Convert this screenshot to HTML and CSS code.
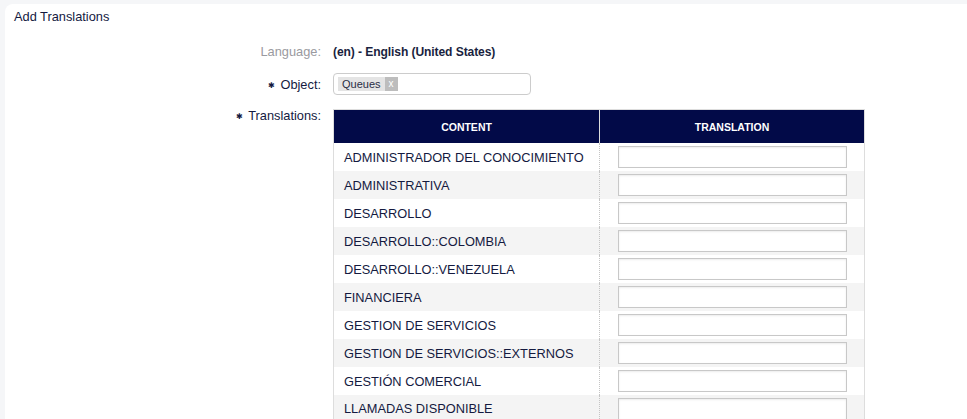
FILE: index.html
```html
<!DOCTYPE html>
<html>
<head>
<meta charset="utf-8">
<link rel="stylesheet" href="styles.css">
</head>
<body>
<div class="card">
  <h2 class="title">Add Translations</h2>
  <div class="form">
    <div class="label muted">Language:</div>
    <div class="value lang">(en) - English (United States)</div>

    <div class="label obj"><span class="req">✱</span> Object:</div>
    <div class="value obj">
      <div class="select">
        <span class="tag"><span class="tag-text">Queues</span><span class="tag-x">x</span></span>
      </div>
    </div>

    <div class="label trl"><span class="req">✱</span> Translations:</div>
    <div class="value trl">
      <table class="grid">
        <thead>
          <tr><th>CONTENT</th><th>TRANSLATION</th></tr>
        </thead>
        <tbody>
          <tr><td>ADMINISTRADOR DEL CONOCIMIENTO</td><td><input type="text"></td></tr>
          <tr><td>ADMINISTRATIVA</td><td><input type="text"></td></tr>
          <tr><td>DESARROLLO</td><td><input type="text"></td></tr>
          <tr><td>DESARROLLO::COLOMBIA</td><td><input type="text"></td></tr>
          <tr><td>DESARROLLO::VENEZUELA</td><td><input type="text"></td></tr>
          <tr><td>FINANCIERA</td><td><input type="text"></td></tr>
          <tr><td>GESTION DE SERVICIOS</td><td><input type="text"></td></tr>
          <tr><td>GESTION DE SERVICIOS::EXTERNOS</td><td><input type="text"></td></tr>
          <tr><td>GESTIÓN COMERCIAL</td><td><input type="text"></td></tr>
          <tr><td>LLAMADAS DISPONIBLE</td><td><input type="text"></td></tr>
        </tbody>
      </table>
    </div>
  </div>
</div>
</body>
</html>
```

FILE: styles.css
```css
html, body {
  margin: 0;
  padding: 0;
  background: #f5f6f8;
  overflow: hidden;
}
body {
  font-family: "Liberation Sans", Arial, sans-serif;
  font-size: 12.8px;
  color: #141a3f;
  padding: 4px 0 0 5px;
  height: 419px;
  box-sizing: border-box;
}
.card {
  background: #ffffff;
  border-radius: 8px 0 0 0;
  min-height: 600px;
  width: 1000px;
}
.title {
  margin: 0;
  font-size: 12.8px;
  font-weight: normal;
  color: #141a3f;
  padding: 6px 0 0 9px;
  height: 20px;
  line-height: 14px;
  box-sizing: border-box;
}
.form {
  display: grid;
  grid-template-columns: 316px 1fr;
  column-gap: 12px;
  padding-top: 20px;
}
.label {
  text-align: right;
  color: #141a3f;
  line-height: 16px;
}
.label.muted {
  color: #9a9aa0;
}
.value.lang {
  font-weight: bold;
  color: #1a1f40;
  line-height: 16px;
  font-size: 12.1px;
  letter-spacing: -0.1px;
}
.req {
  font-size: 8px;
  vertical-align: 1px;
  margin-right: 2px;
}
.label.obj {
  margin-top: 13px;
  padding-top: 4px;
}
.value.obj {
  margin-top: 13px;
}
.select {
  width: 198px;
  height: 22px;
  border: 1px solid #cccccc;
  border-radius: 4px;
  box-sizing: border-box;
  display: flex;
  align-items: center;
  padding-left: 4px;
}
.tag {
  display: inline-flex;
  height: 14px;
  font-size: 11px;
  line-height: 14px;
  color: #2a2d45;
}
.tag-text {
  background: #e4e4e4;
  padding: 0 4px;
}
.tag-x {
  background: #bdbdbd;
  color: #ffffff;
  padding: 0 4px;
  font-size: 10px;
}
.label.trl {
  margin-top: 13px;
}
.value.trl {
  margin-top: 14px;
}
.grid {
  border-collapse: collapse;
  width: 532px;
  border: 1px solid #dddddd;
  table-layout: fixed;
}
.grid th {
  background: #020a48;
  color: #ffffff;
  font-size: 10.5px;
  font-weight: bold;
  height: 33px;
  padding: 0;
  text-align: center;
  border-left: 1px solid #dddddd;
}
.grid th:first-child {
  border-left: none;
  width: 265px;
}
.grid td {
  height: 28px;
  padding: 0 0 0 10px;
  box-sizing: border-box;
  color: #141a3f;
  white-space: nowrap;
}
.grid td + td {
  border-left: 1px dotted #c4c4c4;
  padding: 0;
  text-align: center;
}
.grid tbody tr:nth-child(even) td {
  background: #f4f4f4;
}
.grid input {
  width: 229px;
  height: 22px;
  box-sizing: border-box;
  border: 1px solid #c8c8c8;
  box-shadow: inset 0 1px 2px rgba(0,0,0,0.08);
  background: #ffffff;
  display: block;
  margin: 0 auto;
}
```
